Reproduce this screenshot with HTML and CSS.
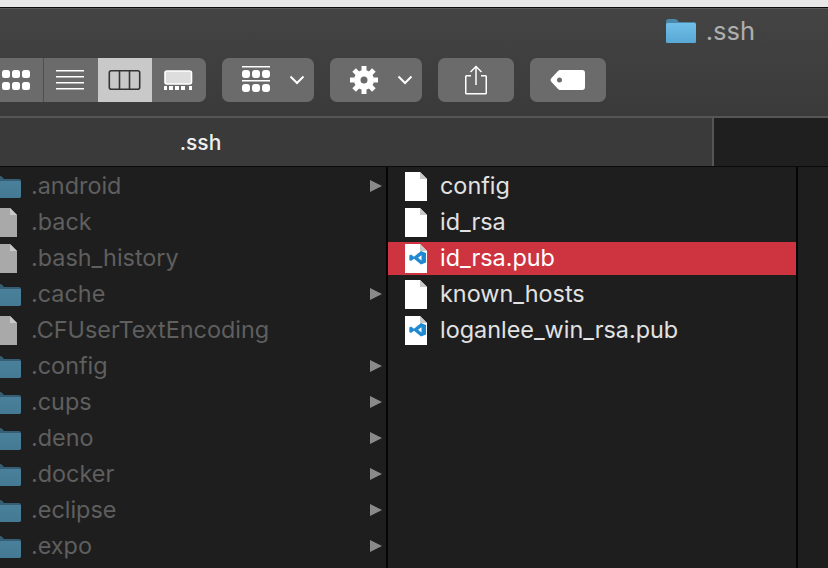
FILE: index.html
```html
<!DOCTYPE html>
<html lang="en">
<head>
<meta charset="utf-8">
<title>.ssh</title>
<link rel="stylesheet" href="styles.css">
</head>
<body>
<svg class="defs" width="0" height="0" aria-hidden="true">
  <defs>
    <linearGradient id="fold" x1="0" y1="0" x2="0" y2="1"><stop offset="0" stop-color="#70bfe8"/><stop offset="1" stop-color="#58a8d6"/></linearGradient>
    <linearGradient id="foldDim" x1="0" y1="0" x2="0" y2="1"><stop offset="0" stop-color="#4a8099"/><stop offset="1" stop-color="#457a94"/></linearGradient>
    <symbol id="folder" viewBox="0 0 30 24">
      <path d="M0 2.500Q0 0 2.500 0H9Q11 0 12 2L13 3H28Q30 3 30 5V22Q30 24 28 24H2Q0 24 0 22Z" fill="#4a87a8"/>
      <path d="M0 5.500Q0 4 1.500 4H28.500Q30 4 30 5.500V22.500Q30 24 28.500 24H1.500Q0 24 0 22.500Z" fill="url(#fold)"/>
    </symbol>
    <symbol id="folder-dim" viewBox="0 0 30 22">
      <path d="M0 2Q0 0 2 0H9Q11 0 12 2L13 3H28Q30 3 30 5V20Q30 22 28 22H2Q0 22 0 20Z" fill="#365f75"/>
      <path d="M0 6Q0 5 1 5H29Q30 5 30 6V20Q30 22 28 22H2Q0 22 0 20Z" fill="url(#foldDim)"/>
    </symbol>
    <symbol id="doc" viewBox="0 0 22 29">
      <path d="M0 0H15L22 7V29H0Z" fill="currentColor"/>
      <path d="M15 0L22 7H15Z" fill="#c9c9c9"/>
    </symbol>
    <symbol id="vscode" viewBox="0 0 22 29">
      <path d="M0 0H15L22 7V29H0Z" fill="#fff"/>
      <path d="M15 0L22 7H15Z" fill="#c9c9c9"/>
      <path d="M16 7L21 9V18.500L16 20.500L9 14.800L6 17L4.300 16V11.500L6 10.500L9 12.800Z" fill="#1f8ad2"/>
      <path d="M16.500 11.200L13 13.800L16.500 16.500Z" fill="#fff"/>
    </symbol>
  </defs>
</svg>
<div class="window">
  <header class="toolbar">
    <div class="title">
      <svg class="title-icon"><use href="#folder"/></svg>
      <span>.ssh</span>
    </div>
    <div class="tools">
      <div class="segments">
        <div class="seg seg-first">
          <svg width="32" height="24" viewBox="0 0 32 24"><g fill="#fff"><rect x="2" y="2" width="8" height="8" rx="2.500"/><rect x="12" y="2" width="8" height="8" rx="2.500"/><rect x="22" y="2" width="8" height="8" rx="2.500"/><rect x="2" y="14" width="8" height="8" rx="2.500"/><rect x="12" y="14" width="8" height="8" rx="2.500"/><rect x="22" y="14" width="8" height="8" rx="2.500"/></g></svg>
        </div>
        <div class="seg">
          <svg width="30" height="24" viewBox="0 0 30 24"><g fill="#fff"><rect x="0" y="2" width="28" height="1.500"/><rect x="0" y="8" width="28" height="1.500"/><rect x="0" y="14" width="28" height="1.500"/><rect x="0" y="20" width="28" height="1.500"/></g></svg>
        </div>
        <div class="seg seg-on">
          <svg width="34" height="24" viewBox="0 0 34 24"><g fill="none" stroke="#333" stroke-width="1.600"><rect x="1.300" y="2.800" width="30.400" height="18.400" rx="2"/><path d="M11.500 3V21M21.500 3V21"/></g></svg>
        </div>
        <div class="seg">
          <svg width="30" height="24" viewBox="0 0 30 24"><rect x="1" y="3" width="26.500" height="13" rx="2" fill="#ddd" stroke="#fff" stroke-width="1.600"/><g fill="#fff"><rect x="0" y="18" width="3" height="4"/><rect x="5" y="18" width="4" height="4"/><rect x="11" y="18" width="4" height="4"/><rect x="17" y="18" width="4" height="4"/><rect x="25" y="18" width="3" height="4"/></g></svg>
        </div>
      </div>
      <div class="btn btn-menu">
        <svg class="menu-icon" width="28" height="28" viewBox="0 0 28 28"><g fill="#fff"><rect x="0" y="0" width="28" height="1.500"/><rect x="0" y="4" width="8" height="8" rx="3"/><rect x="10" y="4" width="8" height="8" rx="3"/><rect x="20" y="4" width="8" height="8" rx="3"/><rect x="0" y="14" width="28" height="1.500"/><rect x="0" y="18" width="8" height="8" rx="3"/><rect x="10" y="18" width="8" height="8" rx="3"/><rect x="20" y="18" width="8" height="8" rx="3"/></g></svg>
        <svg class="chev" width="16" height="10" viewBox="0 0 16 10"><path d="M1.500 1.500L8 8L14.500 1.500" fill="none" stroke="#fff" stroke-width="2"/></svg>
      </div>
      <div class="btn btn-menu btn-gear">
        <svg class="gear" width="28" height="28" viewBox="-14 -14 28 28"><circle r="10" fill="#fff"/><g stroke="#fff" stroke-width="5"><path d="M0-14V14"/><path d="M-14 0H14"/><path d="M-9.900-9.900L9.900 9.900"/><path d="M9.900-9.900L-9.900 9.900"/></g><circle r="3.500" fill="#6b6b6b"/></svg>
        <svg class="chev" width="16" height="10" viewBox="0 0 16 10"><path d="M1.500 1.500L8 8L14.500 1.500" fill="none" stroke="#fff" stroke-width="2"/></svg>
      </div>
      <div class="btn btn-icon">
        <svg width="24" height="30" viewBox="0 0 24 30"><g fill="none" stroke="#fff" stroke-width="1.500"><path d="M7 10.750H2.500Q1.750 10.750 1.750 11.500V28Q1.750 28.750 2.500 28.750H21.500Q22.250 28.750 22.250 28V11.500Q22.250 10.750 21.500 10.750H17"/><path d="M12 20V1.500"/><path d="M6.500 7L12 1.500L17.500 7"/></g></svg>
      </div>
      <div class="btn btn-icon">
        <svg width="36" height="22" viewBox="0 0 36 22"><path d="M10 1H32Q35 1 35 4V18Q35 21 32 21H10Q9 21 8 20L1 12.500Q0 11 1 9.500L8 2Q9 1 10 1ZM9.500 8.500A2.500 2.500 0 1 0 9.500 13.500A2.500 2.500 0 1 0 9.500 8.500Z" fill="#fff" fill-rule="evenodd"/></svg>
      </div>
    </div>
  </header>
  <div class="tabbar">
    <div class="tab">.ssh</div>
  </div>
  <main class="browser">
    <section class="col col-parent">
      <div class="row"><svg class="ic-folder"><use href="#folder-dim"/></svg><span class="name">.android</span><i class="arrow"></i></div>
      <div class="row"><svg class="ic-doc"><use href="#doc"/></svg><span class="name">.back</span></div>
      <div class="row"><svg class="ic-doc"><use href="#doc"/></svg><span class="name">.bash_history</span></div>
      <div class="row"><svg class="ic-folder"><use href="#folder-dim"/></svg><span class="name">.cache</span><i class="arrow"></i></div>
      <div class="row"><svg class="ic-doc"><use href="#doc"/></svg><span class="name">.CFUserTextEncoding</span></div>
      <div class="row"><svg class="ic-folder"><use href="#folder-dim"/></svg><span class="name">.config</span><i class="arrow"></i></div>
      <div class="row"><svg class="ic-folder"><use href="#folder-dim"/></svg><span class="name">.cups</span><i class="arrow"></i></div>
      <div class="row"><svg class="ic-folder"><use href="#folder-dim"/></svg><span class="name">.deno</span><i class="arrow"></i></div>
      <div class="row"><svg class="ic-folder"><use href="#folder-dim"/></svg><span class="name">.docker</span><i class="arrow"></i></div>
      <div class="row"><svg class="ic-folder"><use href="#folder-dim"/></svg><span class="name">.eclipse</span><i class="arrow"></i></div>
      <div class="row"><svg class="ic-folder"><use href="#folder-dim"/></svg><span class="name">.expo</span><i class="arrow"></i></div>
    </section>
    <section class="col col-files">
      <div class="row"><svg class="ic-file"><use href="#doc"/></svg><span class="name">config</span></div>
      <div class="row"><svg class="ic-file"><use href="#doc"/></svg><span class="name">id_rsa</span></div>
      <div class="row row-selected"><svg class="ic-file"><use href="#vscode"/></svg><span class="name">id_rsa.pub</span></div>
      <div class="row"><svg class="ic-file"><use href="#doc"/></svg><span class="name">known_hosts</span></div>
      <div class="row"><svg class="ic-file"><use href="#vscode"/></svg><span class="name">loganlee_win_rsa.pub</span></div>
    </section>
    <section class="col col-rest"></section>
  </main>
</div>
</body>
</html>
```
FILE: styles.css
```css
* { box-sizing: border-box; }
html, body { margin: 0; height: 100%; background: #1e1e1e; }
body { overflow: hidden; font-family: Inter, "Liberation Sans", sans-serif; }
.defs { position: absolute; }
.window { width: 828px; height: 568px; display: flex; flex-direction: column; overflow: hidden; border-top: 7px solid #e8e8e8; }

.toolbar { height: 111px; flex: none; display: flex; flex-direction: column; border-top: 1px solid #0c0c0c; border-bottom: 2px solid #565656; box-shadow: inset 0 1px 0 #5a5a5a; background: linear-gradient(#444, #3a3a3a); }
.title { height: 50px; flex: none; padding: 0 73px 5px 0; display: flex; justify-content: flex-end; align-items: center; gap: 10px; color: #aeaeae; font-size: 25.5px; }
.title-icon { width: 30px; height: 24px; }
.tools { display: flex; gap: 16px; height: 44px; margin-left: -11px; }
.segments { display: flex; width: 217px; border-radius: 7px; overflow: hidden; background: #6b6b6b; }
.seg { width: 54px; display: flex; align-items: center; justify-content: center; }
.seg-first { width: 55px; border-right: 1px solid #505050; }
.seg-on { background: #c9c9c9; }
.btn { display: flex; align-items: center; background: #6b6b6b; border-radius: 7px; }
.btn-menu { width: 92px; padding-left: 20px; }
.btn-icon { width: 76px; justify-content: center; }
.chev { margin-left: 19px; }

.tabbar { height: 48px; flex: none; display: flex; background: #1f1f1f; }
.tab { width: 1025px; flex: none; margin-left: -311px; background: #3a3a3a; border-right: 2px solid #565656; display: flex; align-items: center; justify-content: center; color: #f0f0f0; font-size: 21px; font-weight: 500; }

.browser { flex: 1; min-height: 0; display: flex; border-top: 1px solid #0a0a0a; background: #1e1e1e; }
.col { display: flex; flex-direction: column; gap: 3px; padding-top: 3px; border-right: 2px solid #050505; overflow: hidden; }
.col-parent { width: 388px; flex: none; color: #5f5f5f; }
.col-files { width: 410px; flex: none; color: #e2e2e2; }
.col-rest { flex: 1; border-right: 0; }
.row { height: 33px; flex: none; display: flex; align-items: center; position: relative; font-size: 23.4px; white-space: nowrap; }
.col-parent .row { padding-left: 31px; }
.col-files .row { padding-left: 52px; }
.row-selected { background: #cd343f; color: #fff; }
.name { display: block; padding-bottom: 2px; }
.ic-folder { position: absolute; left: -9px; top: 6px; width: 30px; height: 22px; }
.ic-doc { position: absolute; left: -5px; top: 2px; width: 22px; height: 29px; color: #a9a9a9; }
.ic-file { position: absolute; left: 17px; top: 2px; width: 22px; height: 29px; color: #fff; }
.arrow { position: absolute; left: 370px; top: 10px; width: 0; height: 0; border-left: 12px solid #8a8a8a; border-top: 6.5px solid transparent; border-bottom: 6.5px solid transparent; }
```
